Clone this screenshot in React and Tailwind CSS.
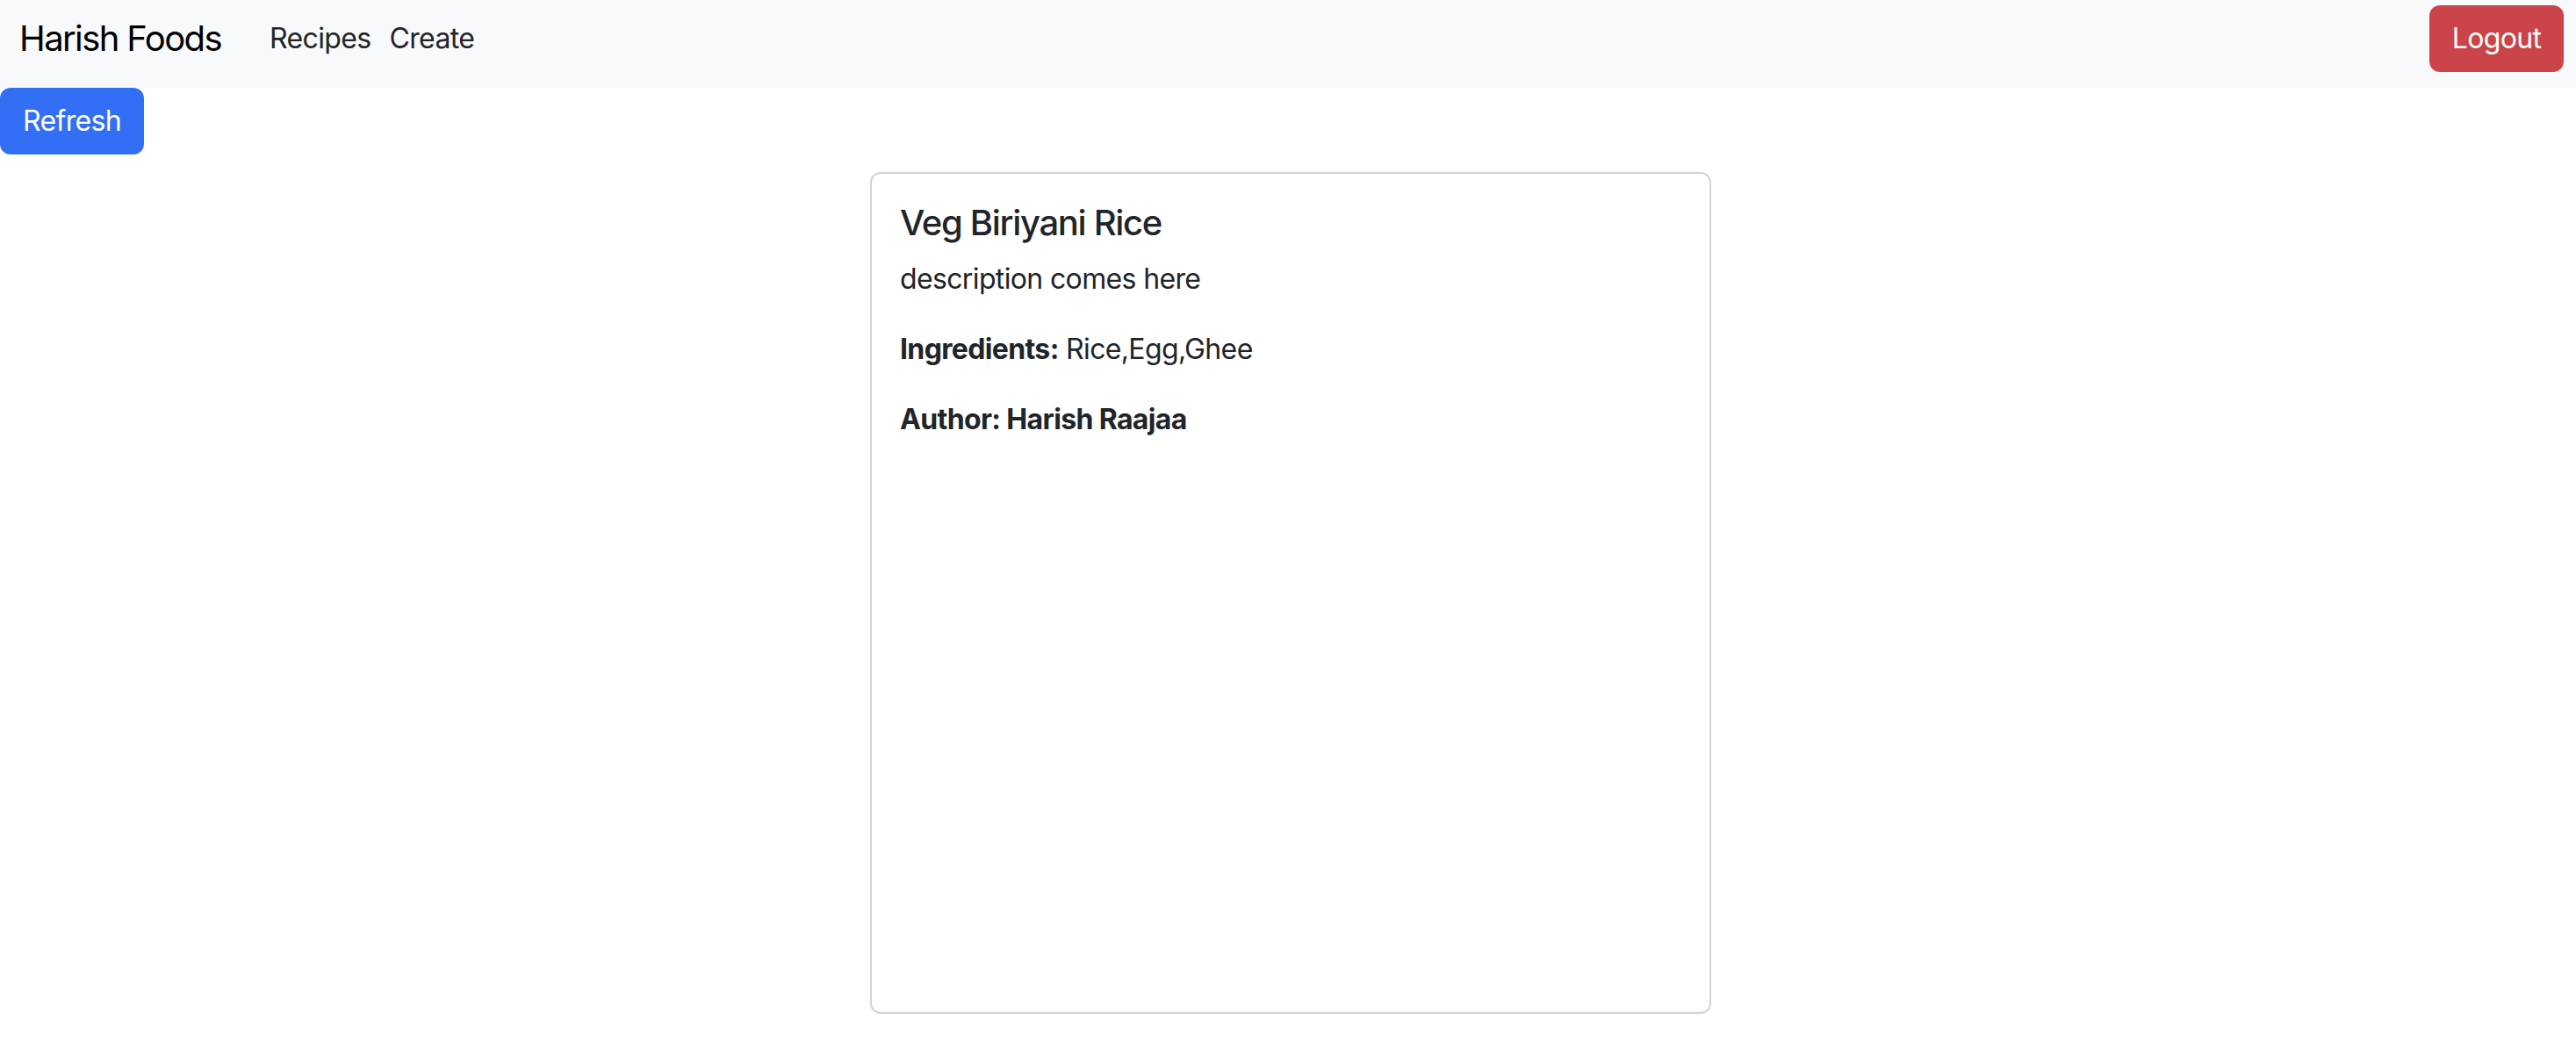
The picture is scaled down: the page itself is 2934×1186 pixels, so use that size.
import React from "react";

const recipe = {
    title: "Veg Biriyani Rice",
    description: "description comes here",
    ingredients: "Rice,Egg,Ghee",
    author: "Harish Raajaa",
};

const App = () => {
    return (
        <div className="min-h-screen bg-white font-['Inter',sans-serif] text-[#212529]">
            <nav className="flex h-[100px] items-start bg-[#f8f9fa] pl-[22px] pr-[14px] pt-[6px]">
                <a className="flex h-[76px] items-center text-[40px] leading-none tracking-[-0.04em] text-black">
                    Harish Foods
                </a>
                <div className="ml-[55px] flex h-[76px] items-center gap-[21px] text-[32px] leading-none tracking-[-0.02em]">
                    <a>Recipes</a>
                    <a>Create</a>
                </div>
                <button className="ml-auto flex h-[76px] w-[153px] items-center justify-center rounded-[12px] bg-[#cb444a] text-[32px] tracking-[-0.02em] text-white">
                    Logout
                </button>
            </nav>

            <button className="flex h-[76px] w-[164px] items-center justify-center rounded-[12px] bg-[#336ff5] text-[32px] tracking-[-0.02em] text-white">
                Refresh
            </button>

            <div className="mt-[20px] flex justify-center pl-[6px]">
                <div className="h-[959px] w-[958px] rounded-[12px] border-2 border-[#d3d3d3] p-[32px]">
                    <h5 className="mb-[16px] text-[40px] font-medium leading-[48px] tracking-[-0.033em]">
                        {recipe.title}
                    </h5>
                    <p className="mb-[32px] text-[32px] leading-[48px] tracking-[-0.02em]">
                        {recipe.description}
                    </p>
                    <p className="mb-[32px] text-[32px] leading-[48px] tracking-[-0.02em]">
                        <strong className="font-bold">Ingredients:</strong>{" "}
                        {recipe.ingredients}
                    </p>
                    <p className="text-[32px] font-bold leading-[48px] tracking-[-0.02em]">
                        Author: {recipe.author}
                    </p>
                </div>
            </div>
        </div>
    );
};

export default App;
